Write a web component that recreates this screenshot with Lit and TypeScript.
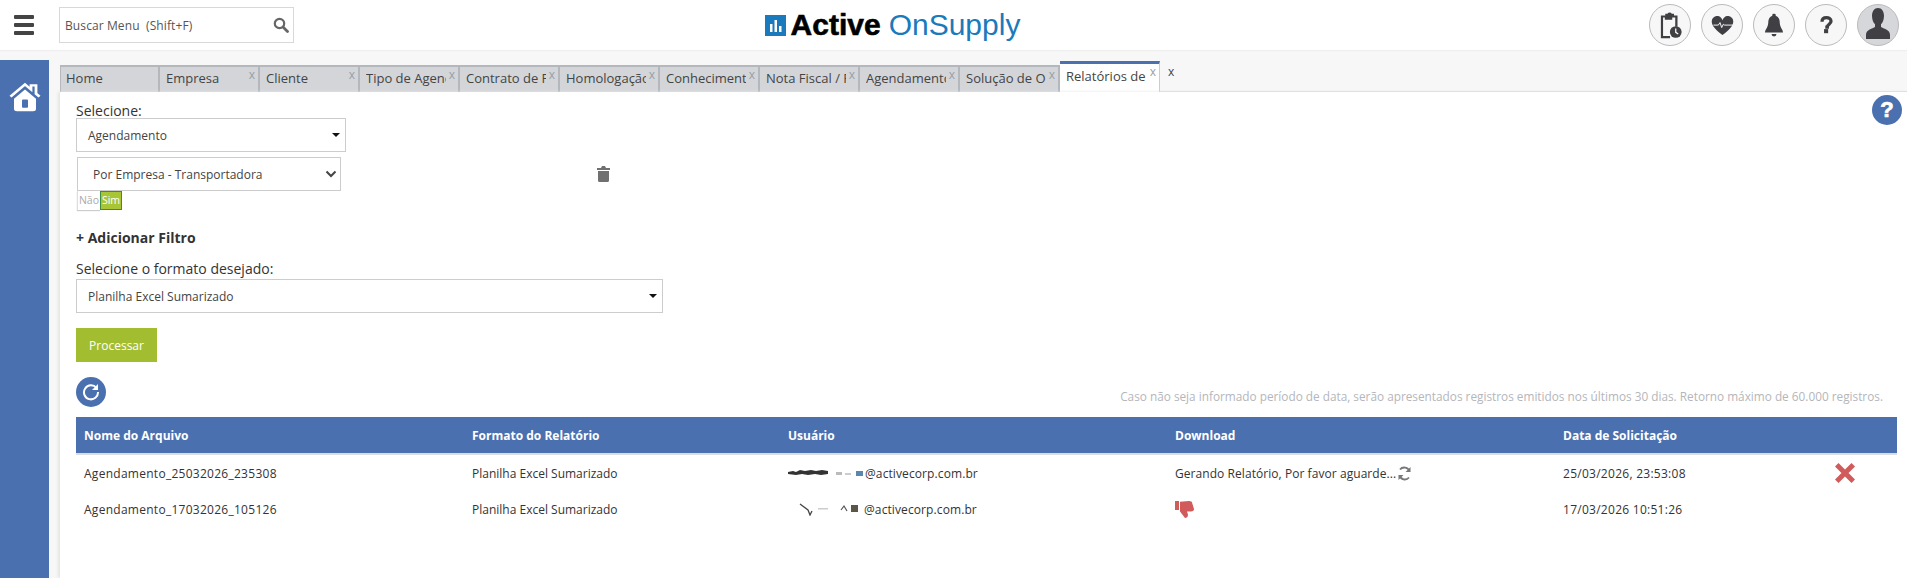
import { LitElement, html, css } from "lit";
import { customElement } from "lit/decorators.js";

const TABS = ["Home","Empresa","Cliente","Tipo de Agendamento","Contrato de Frete","Homologação","Conhecimento","Nota Fiscal / Fatura","Agendamento","Solução de Ocorrência"];

const caret = html`<svg class="caret" width="8" height="4" viewBox="0 0 8 4"><path d="M0 0h8L4 4z" fill="#111"/></svg>`;
const chevron = html`<svg width="12" height="8" viewBox="0 0 12 8"><path d="M1.500 1.500 6 6l4.500-4.500" fill="none" stroke="#444" stroke-width="2"/></svg>`;

@customElement("app-root")
export class AppRoot extends LitElement {
  static styles = css`
    :host { display: flex; flex-direction: column; height: 578px; overflow: hidden; font-family: "Open Sans", sans-serif; font-size: 12px; color: #333; background: #f7f7f7; }
    * { box-sizing: border-box; }
    header { height: 50px; flex: none; background: #fff; display: flex; align-items: center; padding: 0 8px 0 14px; box-shadow: 0 1px 1px #eee; }
    .burger { width: 20px; display: flex; flex-direction: column; gap: 4px; margin-right: 25px; }
    .burger i { display: block; height: 4px; background: #444; border-radius: 1px; }
    .search { width: 235px; height: 36px; border: 1px solid #d8d8d8; display: flex; align-items: center; justify-content: space-between; padding: 0 4px 0 5px; color: #555; font-size: 12px; letter-spacing: .1px; }
    .logo { flex: 1; display: flex; align-items: center; justify-content: center; font-family: "Liberation Sans", sans-serif; font-size: 30px; line-height: 40px; padding-right: 158px; }
    .logo svg { margin-right: 5px; }
    .logo b { color: #000; font-weight: 700; -webkit-text-stroke: .6px #000; margin-right: 8px; }
    .logo span { color: #1a7abb; }
    .actions { display: flex; gap: 10px; }
    .circle { width: 42px; height: 42px; border-radius: 50%; border: 1px solid #bbb; background: #f7f7f7; display: flex; align-items: center; justify-content: center; }
    .circle.user { background: #d6d7da; overflow: hidden; padding-bottom: 4px; }
    .body { flex: 1; display: flex; min-height: 0; }
    .side { width: 49px; margin-top: 10px; background: #4a70b0; flex: none; display: flex; justify-content: center; align-items: flex-start; padding-top: 22px; }
    .main { flex: 1; margin-left: 11px; min-width: 0; display: flex; flex-direction: column; }
    .tabs { display: flex; align-items: flex-end; height: 42px; flex: none; border-bottom: 1px solid #ddd; }
    .tab { width: 100px; height: 27px; flex: none; background: #d3d5d9; border-top: 2px solid #b4b7bb; border-right: 2px solid #b4b7bb; position: relative; padding: 1px 0 0 6px; font-size: 13px; line-height: 20px; color: #444; margin-bottom: -1px; }
    .tab:first-child { border-left: 1px solid #b4b7bb; padding-left: 5px; }
    .tab .lbl { display: block; width: 80px; overflow: hidden; white-space: nowrap; }
    .tab .x { position: absolute; right: 3px; top: 1px; font-size: 12px; line-height: 14px; color: #9a9da3; }
    .tab.active { height: 31px; background: #fff; border-top: 3px solid #4a70b0; border-right: 1px solid #ccc; padding-top: 2px; }
    .close { margin: 0 0 auto 8px; padding-top: 14px; font-size: 12px; line-height: 16px; color: #444; }
    .content { flex: 1; background: #fff; box-shadow: -2px 0 3px #e4e4e4; padding: 11px 10px 0 16px; position: relative; min-height: 0; }
    .help { position: absolute; right: 5px; top: 3px; width: 30px; height: 30px; border-radius: 50%; background: #4a70b0; color: #fff; display: flex; align-items: center; justify-content: center; font: 700 22px/30px "Liberation Sans", sans-serif; -webkit-text-stroke: .7px #fff; }
    .lab { font-size: 14px; line-height: 16px; color: #333; }
    .sel { height: 34px; border: 1px solid #ccc; display: flex; align-items: center; justify-content: space-between; padding: 0 5px 0 11px; color: #444; font-size: 12px; }
    .s1 { width: 270px; margin-top: -1px; }
    .row2 { display: flex; align-items: center; margin-top: 5px; }
    select { width: 264px; height: 34px; margin-left: 1px; border: 1px solid #ccc; border-radius: 0; background: #fff; appearance: none; font: 12px "Open Sans", sans-serif; color: #444; padding: 0 0 0 15px; }
    .selwrap { position: relative; display: flex; }
    .selwrap svg { position: absolute; right: 4px; top: 13px; pointer-events: none; }
    .trash { margin-left: 256px; display: flex; }
    .toggle { display: flex; width: 45px; height: 19px; margin-left: 1px; font-size: 10.500px; line-height: 18px; text-align: center; }
    .toggle .n { width: 23px; background: #fff; color: #aaa; border-left: 1px solid #ddd; box-shadow: 0 1px 1px #ccc; }
    .toggle .y { width: 22px; background: #a8c535; color: #fff; border: 1px solid #3d8b3d; line-height: 16px; }
    .add { font-weight: 700; font-size: 14px; line-height: 20px; color: #333; margin-top: 18px; }
    .fmt { margin-top: 13px; }
    .s3 { width: 587px; margin-top: 2px; }
    .btn { width: 81px; height: 34px; margin-top: 15px; background: #a3bd31; color: #fff; display: flex; align-items: center; justify-content: center; font-size: 12px; }
    .toolbar { display: flex; justify-content: space-between; align-items: flex-start; margin-top: 15px; height: 30px; }
    .refresh { width: 30px; height: 30px; border-radius: 50%; background: #4a70b0; display: flex; align-items: center; justify-content: center; }
    .note { color: #b4b6bb; font-size: 11.800px; line-height: 16px; margin-top: 11px; margin-right: 14px; }
    .table { margin-top: 10px; }
    .tr { display: grid; grid-template-columns: 388px 316px 387px 388px 342px; width: 1821px; align-items: center; }
    .tr > div { padding-left: 8px; }
    .th { height: 38px; background: #4a70b0; color: #fff; font-weight: 700; border-bottom: 2px solid #dcdde1; }
    .td { height: 36px; color: #333; }
    .fname { letter-spacing: .27px; }
    .mail { display: flex; align-items: center; letter-spacing: .1px; }
    .mask { display: block; margin-right: 1px; filter: blur(.4px); }
    .status { display: flex; align-items: center; gap: 1px; letter-spacing: .06px; }
    .lastw { display: flex; align-items: center; gap: 149px; }
  `;

  render() {
    return html`
      <header>
        <div class="burger"><i></i><i></i><i></i></div>
        <div class="search"><span>Buscar Menu&nbsp; (Shift+F)</span>
          <svg width="16" height="16" viewBox="0 0 16 16"><circle cx="6.500" cy="6.500" r="4.700" fill="none" stroke="#666" stroke-width="2.200"/><path d="M10 10l4.500 4.500" stroke="#666" stroke-width="2.800" stroke-linecap="round"/></svg></div>
        <div class="logo">
          <svg width="21" height="21" viewBox="0 0 21 21"><rect width="21" height="21" fill="#1a7abb"/><path d="M5 9h2.500v8H5zM9.500 5H12v12H9.500zM14 11h2.500v6H14z" fill="#fff"/></svg>
          <b>Active</b><span>OnSupply</span>
        </div>
        <div class="actions">
          <div class="circle"><svg width="23" height="28" viewBox="0 0 26 32"><path d="M2 5h5V3h2.500a3 3 0 0 1 5 0H17v2h4v13h-2.600V7.500H15V10H6.500V7.500H4.500v21h8v2.500H2z" fill="#3f3f44"/><circle cx="19" cy="24" r="6.700" fill="#3f3f44"/><path d="M19 20v4.400l2.800 1.800" fill="none" stroke="#fff" stroke-width="1.400"/></svg></div>
          <div class="circle"><svg width="23" height="19" viewBox="0 0 26 23"><path d="M13 23C5 17 0 12 0 7a6.600 6.600 0 0 1 13-2 6.600 6.600 0 0 1 13 2c0 5-5 10-13 16z" fill="#3f3f44"/><path d="M2 11h6l2-3 2 6 2-4 1.500 1H26" fill="none" stroke="#f7f7f7" stroke-width="1.200"/></svg></div>
          <div class="circle"><svg width="18" height="25" viewBox="0 0 22 29"><path d="M11 0a2 2 0 0 1 2 2.500c3.500 1 5 4.500 5 8 0 6 4 9 4 12.500H0c0-3.500 4-6.500 4-12.500 0-3.500 1.500-7 5-8A2 2 0 0 1 11 0z" fill="#3f3f44"/><path d="M8 25h6a3 3 0 0 1-6 0z" fill="#3f3f44"/></svg></div>
          <div class="circle"><svg width="13" height="18" viewBox="0 0 15 22"><path d="M2 7C2 3.500 4.500 2 7.500 2S13 3.800 13 6.300c0 3.700-4.500 3.700-4.500 7.200H6" fill="none" stroke="#3f3f44" stroke-width="4"/><rect x="4.500" y="16" width="5" height="5" fill="#3f3f44"/></svg></div>
          <div class="circle user"><svg width="24" height="31" viewBox="0 0 32 36" preserveAspectRatio="none"><path d="M16 0c5 0 8 4 8 9 0 4-1.500 8-4 10v3c3 2 12 3 12 9v5H0v-5c0-6 9-7 12-9v-3c-2.500-2-4-6-4-10 0-5 3-9 8-9z" fill="#3f3f44"/></svg></div>
        </div>
      </header>
      <div class="body">
        <aside class="side">
          <svg width="32" height="30" viewBox="0 0 32 36" preserveAspectRatio="none"><path d="M1.500 17.500 16 3l6 6V4h5v10l3.500 3.500" fill="none" stroke="#fff" stroke-width="2.800"/><path d="M5 20 16 9l11 11v12a3 3 0 0 1-3 3H8a3 3 0 0 1-3-3z" fill="#fff"/><rect x="13" y="21" width="6" height="10" rx="1" fill="#4a70b0"/></svg>
        </aside>
        <div class="main">
          <div class="tabs">
            ${TABS.map((t, i) => html`<div class="tab"><span class="lbl">${t}</span>${i ? html`<span class="x">x</span>` : ""}</div>`)}
            <div class="tab active"><span class="lbl">Relatórios de Agendamento</span><span class="x">x</span></div>
            <span class="close">x</span>
          </div>
          <div class="content">
            <div class="help">?</div>
            <div class="lab">Selecione:</div>
            <div class="sel s1">Agendamento ${caret}</div>
            <div class="row2">
              <div class="selwrap"><select><option>Por Empresa - Transportadora</option></select>${chevron}</div>
              <div class="trash"><svg width="13" height="16" viewBox="0 0 13 16"><path d="M0 2h4l1-2h3l1 2h4v2H0zM1 5h11v9.500a1.500 1.500 0 0 1-1.500 1.500h-8A1.500 1.500 0 0 1 1 14.500z" fill="#707070"/></svg></div>
            </div>
            <div class="toggle"><div class="n">Não</div><div class="y">Sim</div></div>
            <div class="add">+ Adicionar Filtro</div>
            <div class="lab fmt">Selecione o formato desejado:</div>
            <div class="sel s3">Planilha Excel Sumarizado ${caret}</div>
            <div class="btn">Processar</div>
            <div class="toolbar">
              <div class="refresh"><svg width="18" height="18" viewBox="0 0 18 18"><path d="M14.500 5A7 7 0 1 0 16 9" fill="none" stroke="#fff" stroke-width="2"/><path d="M16 1v6h-6z" fill="#fff"/></svg></div>
              <div class="note">Caso não seja informado período de data, serão apresentados registros emitidos nos últimos 30 dias. Retorno máximo de 60.000 registros.</div>
            </div>
            <div class="table">
              <div class="tr th"><div>Nome do Arquivo</div><div>Formato do Relatório</div><div>Usuário</div><div>Download</div><div>Data de Solicitação</div></div>
              <div class="tr td">
                <div class="fname">Agendamento_25032026_235308</div><div>Planilha Excel Sumarizado</div>
                <div class="mail"><svg class="mask" width="76" height="10" viewBox="0 0 76 10"><path d="M0 4l5-1 3 1 4-2 5 1 6-1 5 1 6-1 6 1v3l-7 1-6-1-7 1-6-1-6 1-8-1z" fill="#333"/><rect x="48" y="4" width="6" height="3" fill="#bbb"/><rect x="57" y="5" width="6" height="2" fill="#ccc"/><rect x="68" y="3" width="7" height="5" fill="#5a86b0"/></svg>@activecorp.com.br</div>
                <div class="status">Gerando Relatório, Por favor aguarde...<svg width="15" height="15" viewBox="0 0 15 15"><path d="M12.500 5.500A5.500 5.500 0 0 0 3 3.500M2.500 9.500A5.500 5.500 0 0 0 12 11.500" fill="none" stroke="#777" stroke-width="1.800"/><path d="M13.500 1v5h-5zM1.500 14V9h5z" fill="#777"/></svg></div>
                <div class="lastw"><span class="fname">25/03/2026, 23:53:08</span><svg width="20" height="20" viewBox="0 0 20 20"><path d="M3.500 0 10 6.500 16.500 0 20 3.500 13.500 10 20 16.500 16.500 20 10 13.500 3.500 20 0 16.500 6.500 10 0 3.500z" fill="#d15b5b"/></svg></div>
              </div>
              <div class="tr td">
                <div class="fname">Agendamento_17032026_105126</div><div>Planilha Excel Sumarizado</div>
                <div class="mail"><svg class="mask" width="75" height="14" viewBox="0 0 75 14"><path d="M12 2l8 6 2 5 2-4" fill="none" stroke="#444" stroke-width="1.300"/><rect x="30" y="6" width="10" height="1.500" fill="#ccc"/><path d="M53 8l3-4 3 5" fill="none" stroke="#555" stroke-width="1.200"/><rect x="63" y="3" width="7" height="7" fill="#5c5648"/></svg>@activecorp.com.br</div>
                <div class="status"><svg width="19" height="17" viewBox="0 0 19 21" preserveAspectRatio="none"><path d="M0 0h4v11H0zM5 1l9-1c2 0 3 1 3 2l2 8c0 2-1 3-3 3h-4l1 4c0 2-1 4-3 4l-5-8z" fill="#d15b5b"/></svg></div>
                <div class="fname">17/03/2026 10:51:26</div>
              </div>
            </div>
          </div>
        </div>
      </div>
    `;
  }
}
